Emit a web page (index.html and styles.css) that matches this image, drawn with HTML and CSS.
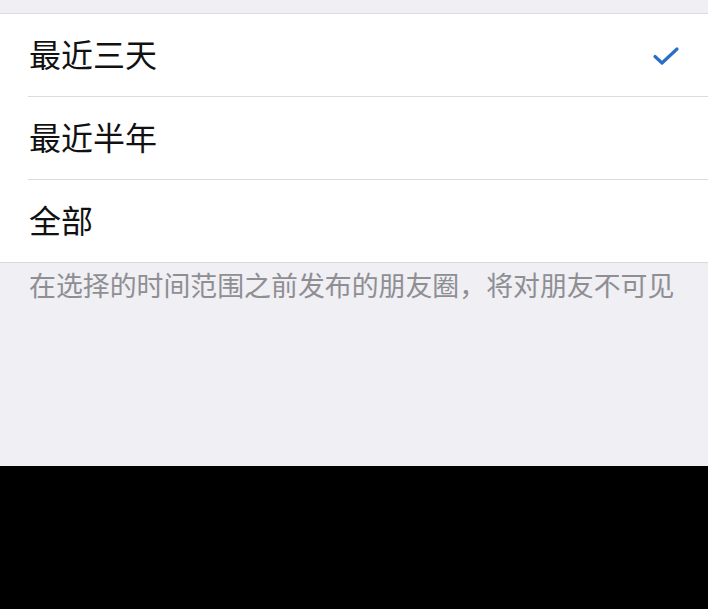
FILE: index.html
```html
<!DOCTYPE html>
<html lang="zh-CN">
<head>
<meta charset="utf-8">
<link rel="stylesheet" href="styles.css">
</head>
<body>
<div class="screen">
  <div class="top-gap"></div>
  <ul class="list">
    <li class="row"><span class="label">最近三天</span>
      <svg class="check" viewBox="0 0 28 22" width="28" height="22"><path d="M3 11.5 L10 18 L25 4" fill="none" stroke="#2a6fc6" stroke-width="3.2" stroke-linecap="round" stroke-linejoin="round"/></svg>
    </li>
    <li class="row"><span class="label">最近半年</span></li>
    <li class="row"><span class="label">全部</span></li>
  </ul>
  <div class="footer">
    <p class="note">在选择的时间范围之前发布的朋友圈，将对朋友不可见</p>
  </div>
</div>
<div class="black"></div>
</body>
</html>
```
FILE: styles.css
```css
html, body {
  margin: 0;
  padding: 0;
  background: #000;
}
.screen {
  background: #efeff4;
  height: 466px;
  font-family: "Noto Sans CJK SC", "Noto Sans", sans-serif;
}
.top-gap {
  height: 13px;
  border-bottom: 1px solid #dcdce0;
}
.list {
  list-style: none;
  margin: 0;
  padding: 0 0 0 28px;
  background: #fff;
  border-bottom: 1px solid #d8d8dc;
}
.row {
  height: 82px;
  display: flex;
  align-items: center;
  justify-content: space-between;
  padding-right: 28px;
  border-bottom: 1px solid #dcdcdf;
}
.row:last-child {
  border-bottom: none;
}
.label {
  font-size: 32px;
  color: #111;
  margin-left: 1px;
  margin-bottom: 5px;
}
.check {
  display: block;
  margin-top: 2px;
}
.footer {
  padding: 4px 0 0 29px;
}
.note {
  margin: 0;
  font-size: 26.9px;
  color: #8e8e93;
  line-height: 36px;
}
.black {
  height: 143px;
  background: #000;
}
```
